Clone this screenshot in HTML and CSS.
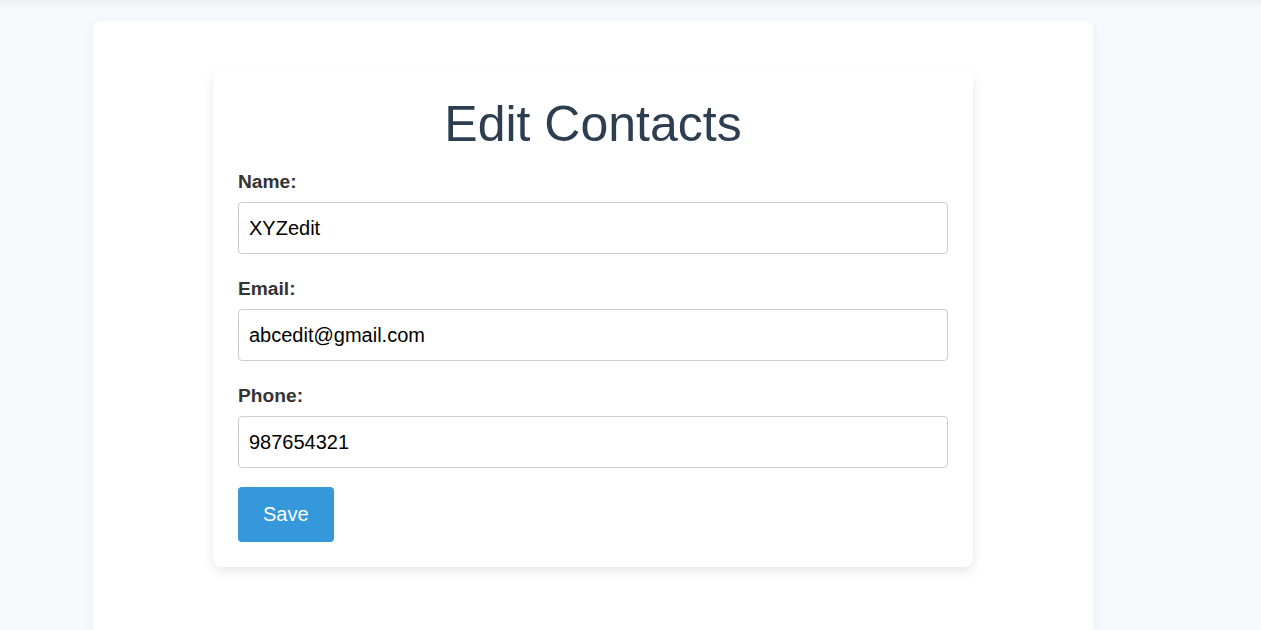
FILE: index.html
```html
<!DOCTYPE html>
<html lang="en">
<head>
<meta charset="utf-8">
<title>Edit Contacts</title>
<link rel="stylesheet" href="styles.css">
</head>
<body>
<div class="page">
  <main class="container">
    <section class="card">
      <h1 class="title">Edit Contacts</h1>
      <form class="form">
        <div class="field">
          <label class="label" for="name">Name:</label>
          <input class="input" id="name" type="text" value="XYZedit">
        </div>
        <div class="field">
          <label class="label" for="email">Email:</label>
          <input class="input" id="email" type="email" value="abcedit@gmail.com">
        </div>
        <div class="field">
          <label class="label" for="phone">Phone:</label>
          <input class="input" id="phone" type="text" value="987654321">
        </div>
        <button class="btn" type="button">Save</button>
      </form>
    </section>
  </main>
</div>
</body>
</html>
```

FILE: styles.css
```css
* { box-sizing: border-box; }
html, body { margin: 0; padding: 0; }
body {
  font-family: "Liberation Sans", Arial, sans-serif;
  background: linear-gradient(#eeeff3 0px, #f7f8fc 9px) no-repeat, #f7f8fc;
  height: 630px;
  overflow: hidden;
}
.page {
  padding: 21px 0 0 93px;
}
.container {
  width: 1000px;
  min-height: 700px;
  background: #ffffff;
  border-radius: 8px;
  box-shadow: 0 2px 10px rgba(0, 0, 0, 0.05);
  padding: 50px 0;
}
.card {
  width: 760px;
  margin: 0 auto;
  background: #ffffff;
  border-radius: 8px;
  box-shadow: 0 4px 12px rgba(0, 0, 0, 0.1);
  padding: 25px 25px 25px;
}
.title {
  margin: 0 0 19px;
  font-size: 50px;
  line-height: 56px;
  font-weight: normal;
  color: #2c3e50;
  text-align: center;
}
.field {
  display: flex;
  flex-direction: column;
  margin-bottom: 24px;
}
.field:last-of-type { margin-bottom: 19px; }
.label {
  font-size: 19.2px;
  line-height: 22px;
  font-weight: bold;
  color: #333333;
  margin-bottom: 9px;
}
.input {
  width: 100%;
  height: 52px;
  border: 1px solid #cccccc;
  border-radius: 4px;
  padding: 0 10px;
  font-family: "Liberation Sans", Arial, sans-serif;
  font-size: 20px;
  color: #000000;
  background: #ffffff;
}
.btn {
  display: block;
  border: none;
  border-radius: 4px;
  background: #3498db;
  color: #ffffff;
  font-family: "Liberation Sans", Arial, sans-serif;
  font-size: 20px;
  line-height: 23px;
  padding: 16px 25px;
  cursor: pointer;
}
```
